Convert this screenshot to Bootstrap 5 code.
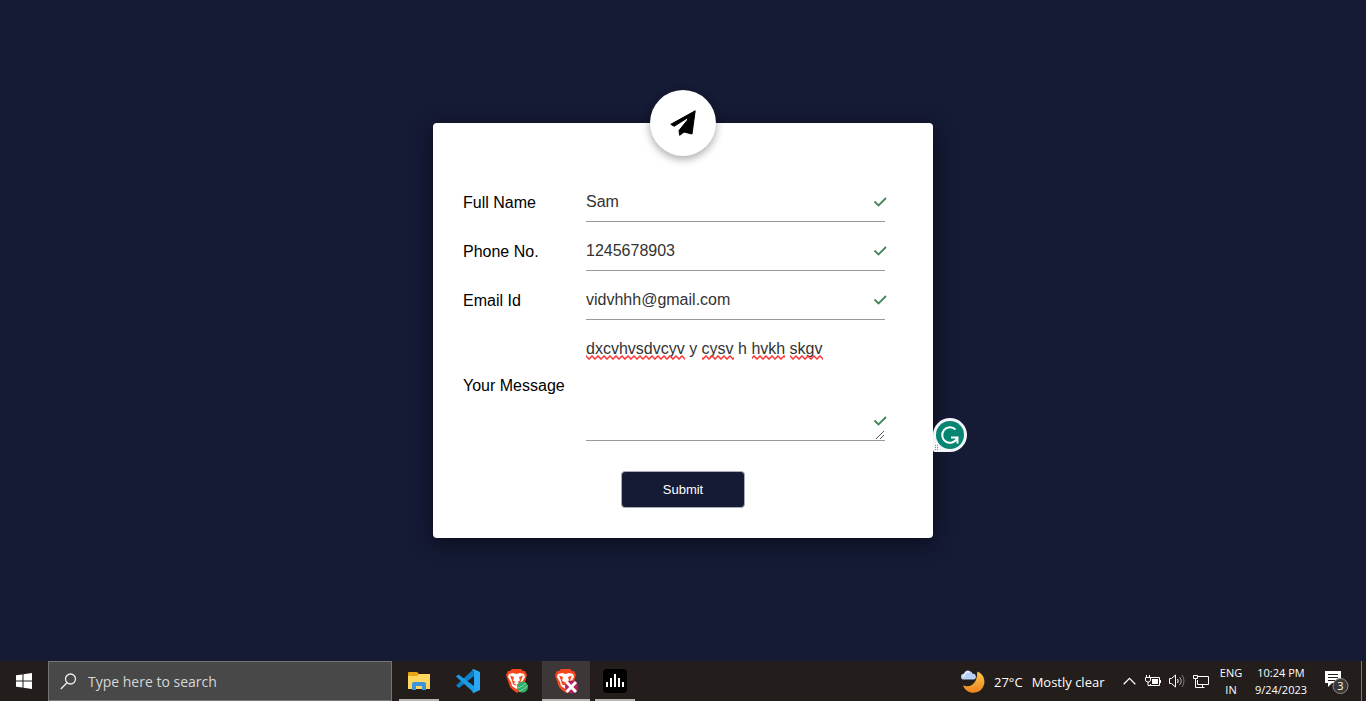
<!DOCTYPE html>
<html lang="en">
<head>
<meta charset="utf-8">
<meta name="viewport" content="width=device-width, initial-scale=1">
<title>Contact form</title>
<link href="https://cdn.jsdelivr.net/npm/bootstrap@5.3.0/dist/css/bootstrap.min.css" rel="stylesheet">
<style>
:root { --navy: #151a35; --ui: "Open Sans", "Noto Sans", sans-serif; }
body { background: var(--navy); color: #000; font-family: "Liberation Sans", Arial, sans-serif; font-size: 16px; }
svg { display: block; }

/* Contact card */
.contact-card { width: 100%; max-width: 500px; background: #fff; border-radius: 4px; padding: 59px 48px 30px 30px; box-shadow: 0 4px 20px rgba(0,0,0,.5); }
.plane-badge { top: 0; left: 50%; width: 66px; height: 66px; background: #fff; box-shadow: 0 3px 8px rgba(0,0,0,.35); }
.form-rows { gap: 9px; }
.field-label { width: 123px; flex: none; padding-top: 2px; }
.line-input { height: 40px; padding: 0; border: 0; border-bottom: 1px solid #999; border-radius: 0; color: #333; background: transparent; font-size: 16px; line-height: 24px; }
.line-input:focus { box-shadow: none; color: #333; background: transparent; border-color: #999; }
textarea.line-input { height: 112px; min-height: 112px; padding-top: 8px; resize: none; }
.tick { right: -2px; top: 14px; }
.tick-low { right: -2px; bottom: 14px; }
.grip { right: 0; bottom: 1px; }
.squiggle { left: 0; top: 26px; }
.submit-row { padding: 30px 0 0 18px; }
.btn-send { width: 124px; height: 37px; padding: 0; background: var(--navy); color: #fff; border: 1px solid #a9abb8; border-radius: 4px; font-size: 13px; }
.btn-send:hover { background: #232a50; color: #fff; }
.helper-badge { left: 100%; bottom: 86px; width: 34px; height: 34px; padding: 0; border: 0; background: none; }

/* Taskbar */
.taskbar { height: 40px; background: #231e1b; color: #fff; font-family: var(--ui); font-size: 13px; }
.taskbar button { padding: 0; border: 0; background: none; color: #fff; display: flex; align-items: center; justify-content: center; height: 40px; }
.start { width: 48px; }
.search-box { flex: 0 1 344px; min-width: 0; background: #484848; border: 1px solid #757575; padding-left: 11px; gap: 11px; }
.search-box input { background: none; border: 0; outline: 0; padding: 0; color: #ddd; font-size: 14px; min-width: 0; flex: 1; }
.search-box input::placeholder { color: #d6d6d6; opacity: 1; }
.apps { gap: 1px; padding-left: 3px; }
.taskbar .app { width: 48px; position: relative; }
.app.running::after { content: ""; position: absolute; left: 4px; right: 4px; bottom: 0; height: 2px; background: #b9b5b3; }
.taskbar .app.current { background: #3d3837; }
.app.current::after { left: 0; right: 0; }
.taskbar .weather { width: 156px; gap: 9px; justify-content: start; white-space: nowrap; }
.weather span { padding-top: 3px; }
.tray-icon { width: 24px; }
.small-text { font-size: 11px; line-height: 17px; text-align: center; }
.lang { width: 36px; }
.clock { width: 64px; }
.notices { width: 48px; }
.desktop-edge { width: 5px; border-left: 1px solid #7d7977 !important; }
</style>
</head>
<body class="d-flex flex-column min-vh-100">

<main class="flex-grow-1 d-flex align-items-center justify-content-center">
  <form class="contact-card position-relative">
    <div class="plane-badge position-absolute translate-middle rounded-circle d-flex align-items-center justify-content-center">
      <svg width="26" height="26" viewBox="0 0 26 26" stroke="#000" stroke-linejoin="round"><path d="M25.200 .8L.8 14.300l3.400 2L16.500 8.500q2-.8 1 1.500L9 20.500l.7 4.800 4.300-3.300 8 2z"/></svg>
    </div>

    <div class="form-rows d-flex flex-column">
      <div class="d-flex align-items-center">
        <label class="field-label" for="name">Full Name</label>
        <div class="position-relative flex-grow-1">
          <input class="form-control line-input" id="name" type="text" value="Sam">
          <svg class="tick position-absolute" width="14" height="12" viewBox="0 0 14 12" fill="none" stroke="#45855a" stroke-width="1.800"><path d="M1.500 5.500l4 4 7.500-7.500"/></svg>
        </div>
      </div>
      <div class="d-flex align-items-center">
        <label class="field-label" for="phone">Phone No.</label>
        <div class="position-relative flex-grow-1">
          <input class="form-control line-input" id="phone" type="tel" value="1245678903">
          <svg class="tick position-absolute" width="14" height="12" viewBox="0 0 14 12" fill="none" stroke="#45855a" stroke-width="1.800"><path d="M1.500 5.500l4 4 7.500-7.500"/></svg>
        </div>
      </div>
      <div class="d-flex align-items-center">
        <label class="field-label" for="email">Email Id</label>
        <div class="position-relative flex-grow-1">
          <input class="form-control line-input" id="email" type="email" value="vidvhhh@gmail.com">
          <svg class="tick position-absolute" width="14" height="12" viewBox="0 0 14 12" fill="none" stroke="#45855a" stroke-width="1.800"><path d="M1.500 5.500l4 4 7.500-7.500"/></svg>
        </div>
      </div>
      <div class="d-flex align-items-center">
        <label class="field-label" for="message">Your Message</label>
        <div class="position-relative flex-grow-1">
          <textarea class="form-control line-input d-block" id="message" spellcheck="false">dxcvhvsdvcyv y cysv h hvkh skgv</textarea>
          <!-- spelling marks under the unknown words -->
          <svg class="squiggle position-absolute pe-none" width="240" height="5">
            <defs><pattern id="wave" width="6" height="5" patternUnits="userSpaceOnUse"><path d="M-1 0L0 1l3 3 3-3 1-1" fill="none" stroke="#f33" stroke-width="1.500"/></pattern></defs>
            <g fill="url(#wave)"><rect width="99" height="5"/><rect x="116" width="32" height="5"/><rect x="166" width="33" height="5"/><rect x="204" width="33" height="5"/></g>
          </svg>
          <svg class="tick-low position-absolute" width="14" height="12" viewBox="0 0 14 12" fill="none" stroke="#45855a" stroke-width="1.800"><path d="M1.500 5.500l4 4 7.500-7.500"/></svg>
          <svg class="grip position-absolute" width="10" height="10" viewBox="0 0 10 10" stroke="#555" stroke-width="1"><path d="M1 9l8-8M5 9l4-4"/></svg>
        </div>
      </div>
    </div>

    <div class="submit-row d-flex justify-content-center">
      <button class="btn btn-send" type="button">Submit</button>
    </div>

    <button class="helper-badge position-absolute" type="button" aria-label="Writing assistant">
      <svg width="34" height="34" viewBox="0 0 34 34">
        <path d="M17 0a17 17 0 1 1 0 34H2a2 2 0 0 1-2-2V17A17 17 0 0 1 17 0z" fill="#f4f5fa"/>
        <circle cx="17" cy="17" r="14" fill="#078573"/>
        <path d="M22.500 11.500A7.800 7.800 0 1 0 24 20.500M18 19.500H24.500V25.500" fill="none" stroke="#fff" stroke-width="2"/>
        <path d="M2.500 27v6M4.500 27v6" stroke="#8a8d9a" stroke-dasharray="1 1"/>
      </svg>
    </button>
  </form>
</main>

<footer class="taskbar d-flex align-items-stretch">
  <button class="start" type="button" aria-label="Start">
    <svg width="16" height="16" viewBox="0 0 16 16" fill="#fff"><path d="M0 2.300L6.500 1.400V7.500H0zM7.500 1.200L16 0V7.500H7.500zM0 8.500H6.500V14.600L0 13.700zM7.500 8.500H16V16L7.500 14.800z"/></svg>
  </button>
  <div class="search-box d-flex align-items-center">
    <svg width="17" height="17" viewBox="0 0 17 17" fill="none" stroke="#eee" stroke-width="1.300"><circle cx="10.500" cy="6" r="5"/><path d="M7 9.700L.8 16"/></svg>
    <input type="text" placeholder="Type here to search" aria-label="Type here to search">
  </div>
  <div class="apps d-flex">
    <button class="app running" type="button" aria-label="File Explorer">
      <svg width="22" height="18" viewBox="0 0 22 18"><path d="M0 1a1 1 0 0 1 1-1h8l2 2h10a1 1 0 0 1 1 1v14H0z" fill="#e8a317"/><path d="M0 4h9l2-2h11v15H0z" fill="#ffd75e"/><path d="M4 18v-6q0-2 2-2h10q2 0 2 2v6h-4v-4H8v4z" fill="#3d93dc"/></svg>
    </button>
    <button class="app" type="button" aria-label="Code editor">
      <svg width="24" height="24" viewBox="0 0 24 24"><path d="M0 16.500L17.500 .3 18 7 3 19z" fill="#0f7fc7"/><path d="M0 7.500L2.500 5.500 18 17v6.700z" fill="#1b9be6"/><path d="M17.500 0L24 3v18l-6.500 3-1.500-1 2-1.500v-19L16 1z" fill="#2aa8f5"/></svg>
    </button>
    <button class="app" type="button" aria-label="Browser">
      <svg width="24" height="26" viewBox="0 0 24 26"><path d="M7 1h9l2 2h2l2 4-1 3-2 9-3 3-4 3-4-3-3-3L2 10 1 7l2-4h2z" fill="#f8461c"/><path d="M4 6l4-1 3.500 1L15 5l4 1 1 3-3 5-1 4-4.500 3L7 18l-1-4-3-5z" fill="#fff"/><path d="M5 7.500l4 1.500-1 3.500 3.500 2 3.500-2L14 9l4-1.500-2 5-1 4-3.500 1-3.500-1-1-4z" fill="#f8461c"/><path d="M9 7.500h5l-1 4.500-1.500 1-1.500-1zM8.500 15l3-1.200 3 1.200-3 2z" fill="#fff"/><circle cx="17.500" cy="19" r="5.500" fill="#32ad68"/><path d="M12.500 20q5-1 8.500-5M14 23.500q5-2 8.500-6" fill="none" stroke="#8bd8a7"/></svg>
    </button>
    <button class="app running current" type="button" aria-label="Browser, second profile">
      <svg width="24" height="26" viewBox="0 0 24 26"><path d="M7 1h9l2 2h2l2 4-1 3-2 9-3 3-4 3-4-3-3-3L2 10 1 7l2-4h2z" fill="#f8461c"/><path d="M4 6l4-1 3.500 1L15 5l4 1 1 3-3 5-1 4-4.500 3L7 18l-1-4-3-5z" fill="#fff"/><path d="M5 7.500l4 1.500-1 3.500 3.500 2 3.500-2L14 9l4-1.500-2 5-1 4-3.500 1-3.500-1-1-4z" fill="#f8461c"/><path d="M9 7.500h5l-1 4.500-1.500 1-1.500-1z" fill="#fff"/><circle cx="17.500" cy="19" r="6.500" fill="#b51d62"/><path d="M12.500 14l9.500 10M22 14l-9.500 10" stroke="#fff" stroke-width="3"/></svg>
    </button>
    <button class="app running" type="button" aria-label="Music">
      <svg width="24" height="24" viewBox="0 0 24 24"><rect width="24" height="24" rx="4" fill="#000"/><path d="M4 13v5M8 9v9M12 5v13M16 9v9M20 13v5" stroke="#fff" stroke-width="2"/></svg>
    </button>
  </div>

  <div class="ms-auto d-flex">
    <button class="weather" type="button">
      <svg width="24" height="25" viewBox="0 0 25 25"><defs><linearGradient id="moon" x2="0" y2="1"><stop stop-color="#ffc94d"/><stop offset="1" stop-color="#ef8420"/></linearGradient></defs><path d="M17 2a11.500 11.500 0 1 1-15 14.500Q7 19 12 15.500T17 2z" fill="url(#moon)"/><path d="M3 10.500a3 3 0 0 1 0-6Q5 0 9 1.500q3 1 3 3a3 3 0 0 1 1 6z" fill="#b9d0f6"/><path d="M3 8a2 2 0 0 1 1-3q2-4 5-2" fill="none" stroke="#e9f1ff" stroke-width="1.500"/></svg>
      <span>27°C</span><span>Mostly clear</span>
    </button>
    <button class="tray-icon" type="button" aria-label="Hidden icons">
      <svg width="13" height="8" viewBox="0 0 13 8" fill="none" stroke="#fff" stroke-width="1.300"><path d="M.7 7.200L6.500 1.400l5.800 5.800"/></svg>
    </button>
    <button class="tray-icon" type="button" aria-label="Battery">
      <svg width="16" height="12" viewBox="0 0 16 12"><path d="M5.500 2.500h9v8h-9V9M1.500 0v3M4.500 0v3M3 7v3.500h2.500" fill="none" stroke="#fff"/><path d="M.5 2.500h5V5q0 2-2.500 2T.5 5z" fill="#231e1b" stroke="#fff"/><path d="M7 4h6v5H7zM15 5h1v3h-1z" fill="#fff"/></svg>
    </button>
    <button class="tray-icon" type="button" aria-label="Volume">
      <svg width="16" height="14" viewBox="0 0 16 14" fill="none" stroke="#fff"><path d="M.5 4.500h2l4-3.500v12l-4-3.500h-2zM8.500 5q1.500 2 0 4"/><path d="M10.500 3q3.500 4 0 8" stroke="#aaa"/><path d="M13 1q4 6 0 12" stroke="#777"/></svg>
    </button>
    <button class="tray-icon" type="button" aria-label="Network">
      <svg width="16" height="14" viewBox="0 0 16 14" fill="none" stroke="#fff"><path d="M5 2.500h10.500v8h-11V6M.5 1.500h4v3h-4zM2.500 5v8.500h9M9.500 10.500v3"/></svg>
    </button>
    <button class="small-text lang" type="button">ENG<br>IN</button>
    <button class="small-text clock" type="button">10:24 PM<br>9/24/2023</button>
    <button class="notices" type="button" aria-label="3 notifications">
      <svg width="24" height="25" viewBox="0 0 24 25"><path d="M0 2h16v12H7l-4 4v-4H0z" fill="#fff"/><path d="M3 5.500h10M3 8.500h10M3 11.500h7" stroke="#231e1b"/><circle cx="15.500" cy="17" r="7.500" fill="#3b3735" stroke="#908d8b"/><text x="15.500" y="21" text-anchor="middle" font-size="11" fill="#fff">3</text></svg>
    </button>
    <button class="desktop-edge" type="button" aria-label="Show desktop"></button>
  </div>
</footer>

<script src="https://cdn.jsdelivr.net/npm/bootstrap@5.3.0/dist/js/bootstrap.bundle.min.js"></script>
</body>
</html>
